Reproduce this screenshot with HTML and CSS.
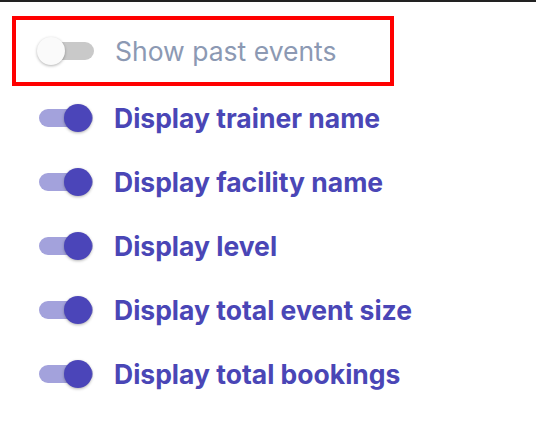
FILE: index.html
```html
<!DOCTYPE html>
<html lang="en">
<head>
  <meta charset="UTF-8" />
  <title>Event settings</title>
  <link rel="stylesheet" href="styles.css">
</head>
<body>
  <div class="topbar"></div>

  <div class="settings">
    <div class="row highlight">
      <div class="switch"><span class="track"></span><span class="knob"></span></div>
      <span class="label">Show past events</span>
    </div>
    <div class="row">
      <div class="switch on"><span class="track"></span><span class="knob"></span></div>
      <span class="label">Display trainer name</span>
    </div>
    <div class="row">
      <div class="switch on"><span class="track"></span><span class="knob"></span></div>
      <span class="label">Display facility name</span>
    </div>
    <div class="row">
      <div class="switch on"><span class="track"></span><span class="knob"></span></div>
      <span class="label">Display level</span>
    </div>
    <div class="row">
      <div class="switch on"><span class="track"></span><span class="knob"></span></div>
      <span class="label">Display total event size</span>
    </div>
    <div class="row">
      <div class="switch on"><span class="track"></span><span class="knob"></span></div>
      <span class="label">Display total bookings</span>
    </div>
  </div>
</body>
</html>
```

FILE: styles.css
```css
body {
  margin: 0;
  background: #fff;
  font-family: Inter, "Liberation Sans", sans-serif;
}
.topbar {
  height: 2px;
  background: #222;
}
.settings {
  padding-top: 14px;
  display: flex;
  flex-direction: column;
}
.row {
  height: 64px;
  display: flex;
  align-items: center;
  gap: 20px;
  padding-left: 36px;
}
.row.highlight {
  margin-left: 12px;
  width: 353px;
  height: 62px;
  padding-left: 21px;
  border: 4px solid #ff0000;
}
.switch {
  position: relative;
  width: 58px;
  height: 30px;
  flex: none;
}
.track {
  position: absolute;
  left: 3px;
  right: 1px;
  top: 6px;
  height: 18px;
  border-radius: 9px;
  background: #c9c9c9;
}
.knob {
  position: absolute;
  top: 1px;
  left: 0;
  width: 28px;
  height: 28px;
  border-radius: 50%;
  background: #fafafa;
  box-shadow: 0 1px 3px rgba(0, 0, 0, 0.3);
}
.switch.on .track {
  background: #a3a2dc;
}
.switch.on .knob {
  left: 28px;
  background: #4b45b9;
}
.label {
  font-size: 26.5px;
  font-weight: 700;
  color: #4a46b6;
}
.highlight .label {
  font-weight: 400;
  color: #8c99b3;
}
```
